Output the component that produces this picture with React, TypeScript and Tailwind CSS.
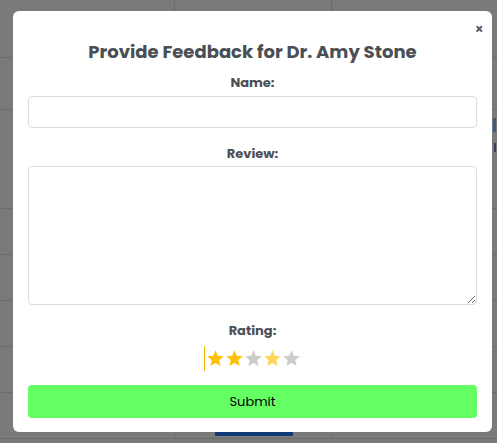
import React from "react";

function Star({ color }: { color: string }) {
  return (
    <svg width="19" height="19" viewBox="0 0 24 24" className="block">
      <polygon
        points="12,1.5 14.9,8.6 22.5,9.2 16.7,14.1 18.5,21.6 12,17.6 5.5,21.6 7.3,14.1 1.5,9.2 9.1,8.6"
        fill={color}
      />
    </svg>
  );
}

export default function App() {
  const font = { fontFamily: "Poppins, Inter, 'Open Sans', sans-serif" };
  const rows = [58, 52, 99, 46, 46, 46, 46, 46];
  return (
    <div className="relative w-[497px] h-[443px] overflow-hidden bg-[#7a7a7a]" style={font}>
      {/* background table (behind overlay) */}
      <div className="flex flex-col">
        {rows.map((h, i) => (
          <div
            key={i}
            className="flex border-b border-[#6c6c6c]"
            style={{ height: h }}
          >
            <div className="w-[175px] border-r border-[#6c6c6c]" />
            <div className="w-[157px] border-r border-[#6c6c6c]" />
            <div className="flex-1" />
          </div>
        ))}
      </div>
      <div className="absolute left-[215px] top-[430px] w-[78px] h-[6px] bg-[#123a78]" />
      <div className="absolute left-[493px] top-[118px] w-[3px] h-[14px] bg-[#3c5a7a]" />
      <div className="absolute left-[494px] top-[143px] w-[2px] h-[9px] bg-[#3a3f55]" />

      {/* modal */}
      <div className="absolute left-[13px] top-[11px] w-[479px] h-[421px] bg-white rounded-[6px] px-[15px] pt-[27px] flex flex-col">
        <button className="absolute right-[8px] top-[10px] text-[14px] leading-[16px] font-semibold text-[#555a60]">
          ×
        </button>
        <h2 className="text-center text-[18px] leading-[28px] font-bold text-[#4a4f56]">
          Provide Feedback for Dr. Amy Stone
        </h2>
        <label className="mt-[8px] text-center text-[13px] leading-[18px] font-bold text-[#4a4f56]">
          Name:
        </label>
        <input className="mt-[4px] h-[32px] w-full rounded-[4px] border border-[#dddddd] outline-none" />
        <label className="mt-[17px] text-center text-[13px] leading-[18px] font-bold text-[#4a4f56]">
          Review:
        </label>
        <textarea className="mt-[3px] h-[139px] w-full rounded-[4px] border border-[#dddddd] outline-none" />
        <label className="mt-[17px] text-center text-[13px] leading-[18px] font-bold text-[#4a4f56]">
          Rating:
        </label>
        <div className="mt-[6px] flex justify-center items-center">
          <div className="w-[1px] h-[25px] bg-[#f5b800] mr-[1px]" />
          <Star color="#ffc107" />
          <Star color="#ffc107" />
          <Star color="#cccccc" />
          <Star color="#ffd65a" />
          <Star color="#cccccc" />
        </div>
        <button className="mt-[14px] h-[33px] w-full rounded-[4px] bg-[#63ff63] text-[13px] font-normal text-black">
          Submit
        </button>
      </div>
    </div>
  );
}
